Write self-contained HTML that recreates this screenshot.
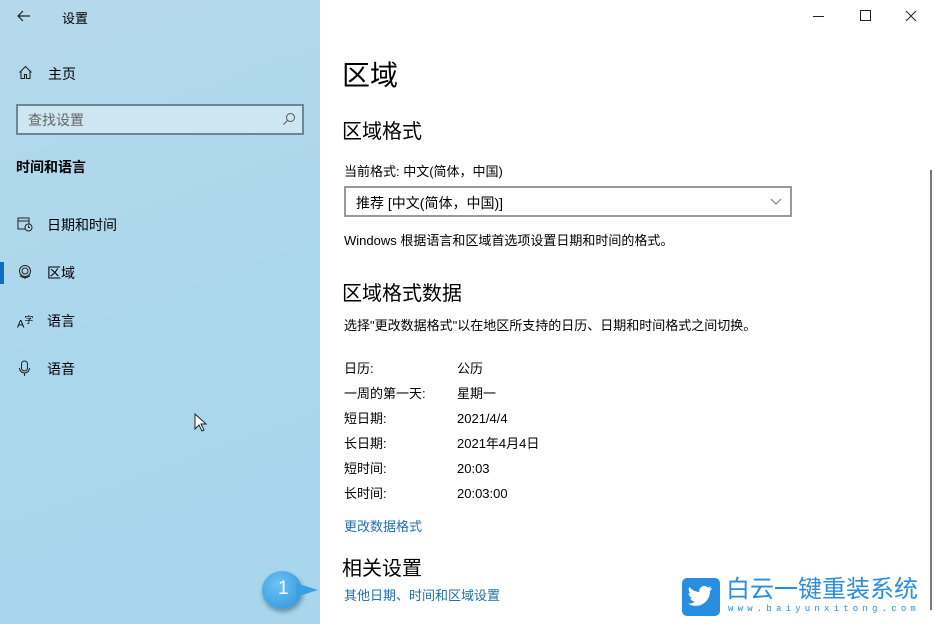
<!DOCTYPE html>
<html><head><meta charset="utf-8"><style>
*{margin:0;padding:0;box-sizing:border-box}
body{width:934px;height:624px;overflow:hidden;position:relative;font-family:"Liberation Sans","Microsoft YaHei","Noto Sans CJK SC",sans-serif;background:#fff;color:#000}
.side{position:absolute;left:0;top:0;width:320px;height:624px;background:linear-gradient(160deg,#b5d8ec 0%,#abd7ec 50%,#a8d6ec 100%)}
.t{position:absolute;white-space:nowrap}
.main{position:absolute;left:320px;top:0;width:614px;height:624px;background:#fff}
.f14{font-size:14px}
.lnk{color:#1f6fa8;font-size:13px}
</style></head><body>
<div class="side">
  <svg class="t" style="left:17px;top:10px" width="14" height="12" viewBox="0 0 14 12"><path d="M13 6H1M6 1L1 6l5 5" stroke="#222" stroke-width="1.2" fill="none"/></svg>
  <div class="t" style="left:62px;top:8px;font-size:13px">设置</div>
  <svg class="t" style="left:18px;top:65px" width="15" height="15" viewBox="0 0 15 15"><path d="M1.5 7.5L7.5 1.5l6 6M3 6v7.5h3.5v-4h2v4H12V6" stroke="#222" stroke-width="1.1" fill="none"/></svg>
  <div class="t f14" style="left:48px;top:64px">主页</div>
  <div class="t" style="left:16px;top:104px;width:288px;height:31px;border:2px solid #6b8797;background:#cde6f2"></div>
  <div class="t f14" style="left:28px;top:110px;color:#666">查找设置</div>
  <svg class="t" style="left:282px;top:112px" width="14" height="14" viewBox="0 0 14 14"><circle cx="8.5" cy="5.5" r="4" stroke="#555" fill="none"/><path d="M5.5 8.5L1.5 12.5" stroke="#555"/></svg>
  <div class="t f14" style="left:16px;top:157px;font-weight:bold">时间和语言</div>
  <svg class="t" style="left:17px;top:216px" width="16" height="16" viewBox="0 0 16 16"><rect x="1" y="2" width="11" height="11" stroke="#222" fill="none"/><path d="M1 5h11" stroke="#222"/><circle cx="11.5" cy="11.5" r="3.5" stroke="#222" fill="#b0d8ec"/><path d="M11.5 9.5v2h1.5" stroke="#222" fill="none"/></svg>
  <div class="t f14" style="left:47px;top:215px">日期和时间</div>
  <div class="t" style="left:0;top:262px;width:4px;height:22px;background:#0a6fc2"></div>
  <svg class="t" style="left:17px;top:264px" width="16" height="16" viewBox="0 0 16 16"><circle cx="8" cy="7" r="5.5" stroke="#222" fill="none"/><circle cx="8" cy="7" r="3" stroke="#222" fill="none"/><path d="M3 11.5a7 7 0 0 0 10 0M8 13v2" stroke="#222" fill="none"/></svg>
  <div class="t f14" style="left:47px;top:263px">区域</div>
  <div class="t" style="left:17px;top:313px;font-size:11px">A<sup style="font-size:9px">字</sup></div>
  <div class="t f14" style="left:47px;top:311px">语言</div>
  <svg class="t" style="left:18px;top:360px" width="13" height="17" viewBox="0 0 13 17"><rect x="3.5" y="1" width="6" height="10" rx="3" stroke="#222" fill="none"/><path d="M1.5 8a5 5 0 0 0 10 0M6.5 13v3" stroke="#222" fill="none"/></svg>
  <div class="t f14" style="left:47px;top:359px">语音</div>
  <svg class="t" style="left:194px;top:413px" width="14" height="20" viewBox="0 0 14 20"><path d="M1 1v15l4-4 3 6 2-1-3-6h5z" fill="#fff" stroke="#222"/></svg>
</div>
<div class="main">
  <div class="t" style="left:493px;top:16px;width:11px;height:1px;background:#222"></div>
  <div class="t" style="left:540px;top:10px;width:11px;height:11px;border:1px solid #222"></div>
  <svg class="t" style="left:585px;top:10px" width="12" height="12" viewBox="0 0 12 12"><path d="M1 1l10 10M11 1L1 11" stroke="#222"/></svg>
  <div class="t" style="left:22px;top:54px;font-size:28px">区域</div>
  <div class="t" style="left:22px;top:115px;font-size:20px">区域格式</div>
  <div class="t f14" style="left:24px;top:161px;font-size:13px">当前格式: 中文(简体，中国)</div>
  <div class="t" style="left:24px;top:186px;width:448px;height:31px;border:2px solid #999"></div>
  <div class="t f14" style="left:36px;top:193px">推荐 [中文(简体，中国)]</div>
  <svg class="t" style="left:450px;top:198px" width="12" height="7" viewBox="0 0 12 7"><path d="M1 1l5 5 5-5" stroke="#777" fill="none"/></svg>
  <div class="t f14" style="left:24px;top:230px;font-size:13px">Windows 根据语言和区域首选项设置日期和时间的格式。</div>
  <div class="t" style="left:22px;top:277px;font-size:20px">区域格式数据</div>
  <div class="t" style="left:24px;top:315px;font-size:13px">选择"更改数据格式"以在地区所支持的日历、日期和时间格式之间切换。</div>
  <div class="t" style="left:24px;top:356px;font-size:13px;line-height:25px">日历:<br>一周的第一天:<br>短日期:<br>长日期:<br>短时间:<br>长时间:</div>
  <div class="t" style="left:137px;top:356px;font-size:13px;line-height:25px">公历<br>星期一<br>2021/4/4<br>2021年4月4日<br>20:03<br>20:03:00</div>
  <div class="t lnk" style="left:24px;top:516px">更改数据格式</div>
  <div class="t" style="left:22px;top:552px;font-size:20px">相关设置</div>
  <div class="t lnk" style="left:24px;top:585px">其他日期、时间和区域设置</div>
  <div class="t" style="left:610px;top:170px;width:2px;height:440px;background:#777"></div>
  <div class="t" style="left:362px;top:578px;width:38px;height:38px;border-radius:5px;background:#2a8ee0"></div>
  <svg class="t" style="left:368px;top:585px" width="26" height="22" viewBox="0 0 26 22"><path d="M24 3c-1 .5-2 .8-3 .9 1-.6 1.8-1.6 2-2.7-1 .6-2 1-3.2 1.2A5 5 0 0 0 11.4 7C7.3 6.8 3.7 4.9 1.3 1.9c-1.3 2.3-.6 5.2 1.6 6.7-.8 0-1.6-.3-2.3-.6 0 2.4 1.7 4.5 4 5-.7.2-1.5.2-2.3.1.7 2 2.6 3.4 4.7 3.5A10 10 0 0 1 0 18.6 14.3 14.3 0 0 0 22 6.5V5.8c1-.7 1.8-1.6 2-2.8z" fill="#fff"/></svg>
  <div class="t" style="left:406px;top:576px;font-size:24px;line-height:28px;color:#2a8ee0">白云一键重装系统</div>
  <div class="t" style="left:408px;top:604px;font-family:'Liberation Mono',monospace;font-size:9px;color:#2a8ee0;letter-spacing:4.2px">www.baiyunxitong.com</div>
</div>
<div class="t" style="left:262px;top:571px;width:40px;height:38px;border-radius:50%;background:radial-gradient(circle at 40% 35%,#6cc2f5,#2b92d8);box-shadow:1px 3px 5px rgba(0,0,0,.35)"></div>
<div class="t" style="left:296px;top:583px;width:0;height:0;border-top:7px solid transparent;border-bottom:7px solid transparent;border-left:22px solid #3aa0e2"></div>
<div class="t" style="left:278px;top:578px;font-size:19px;color:#fff">1</div>
</body></html>
